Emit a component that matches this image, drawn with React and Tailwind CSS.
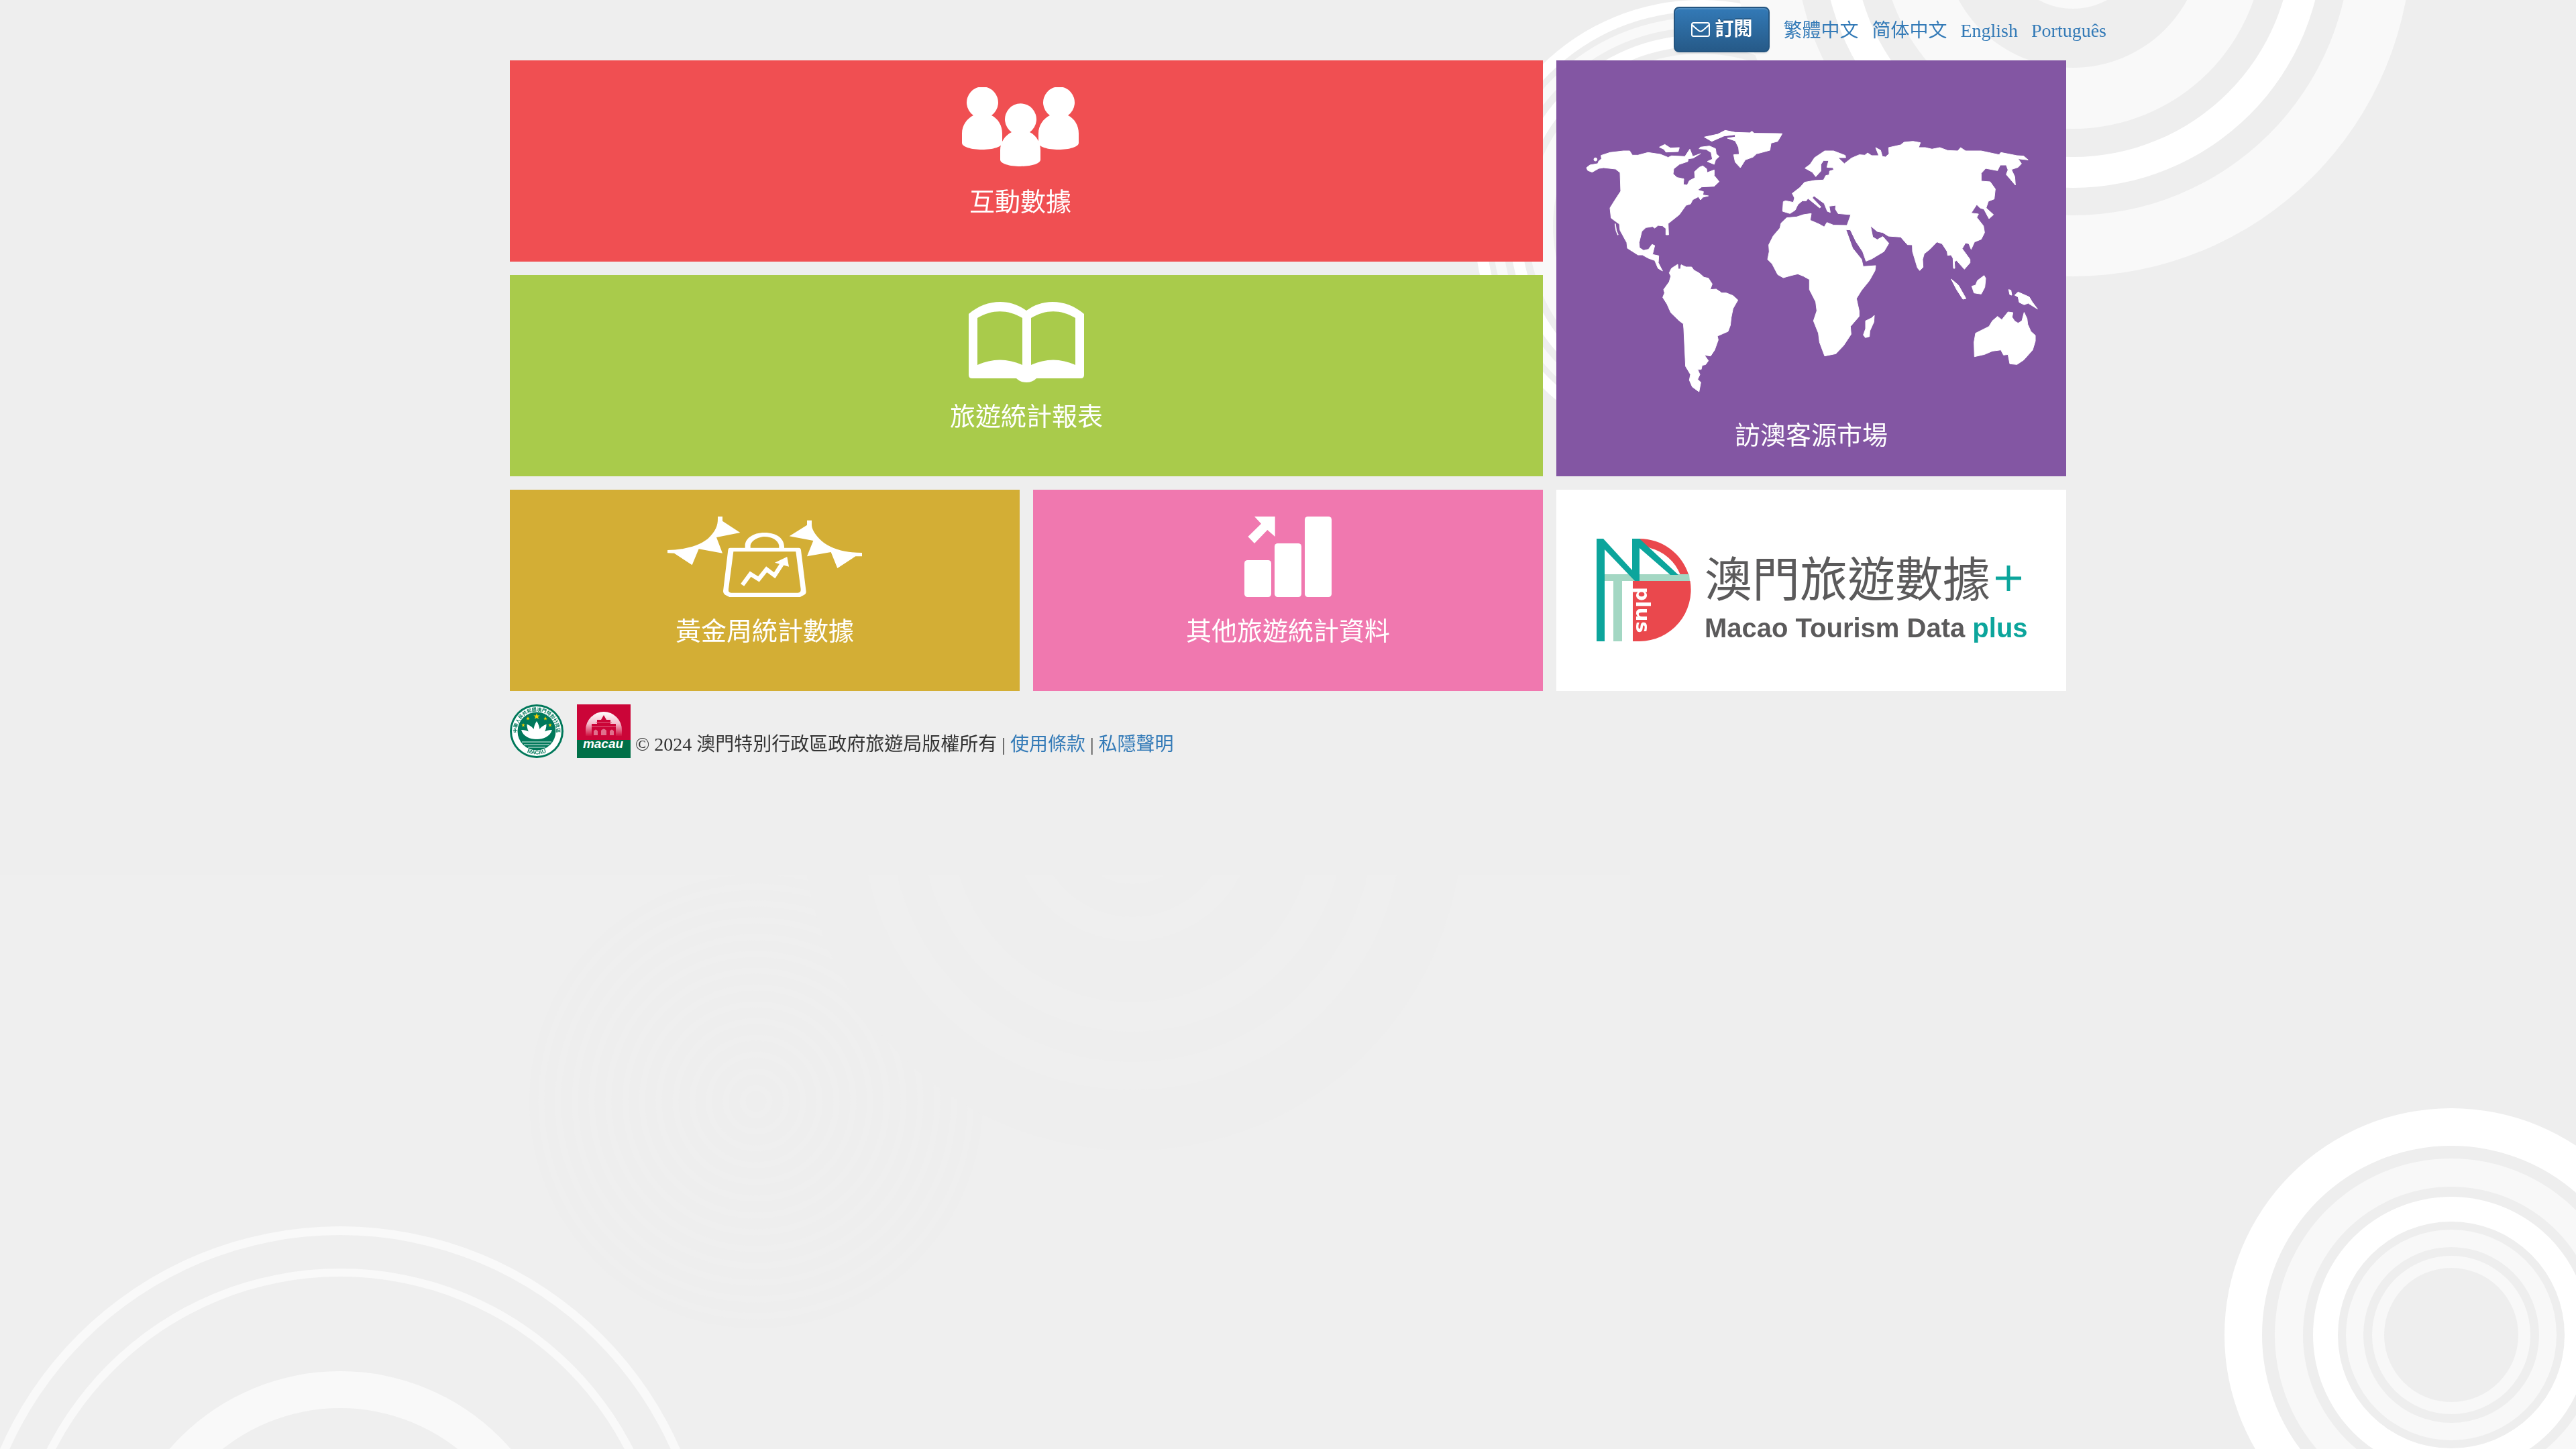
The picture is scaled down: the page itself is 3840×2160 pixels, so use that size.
import React from "react";

const SERIF = "font-['Liberation_Serif','Noto_Sans_CJK_TC',serif]";

/* Concentric rings: [radius, colour], painted from the outside in */
function Rings({ cx, cy, rings }) {
  return rings.map(([r, fill]) => <circle key={r} cx={cx} cy={cy} r={r} fill={fill} />);
}

const FAINT_RIPPLES = Array.from({ length: 13 }, (_, i) => 320 - i * 25);

function Backdrop() {
  const g = "#eeeeee";
  return (
    <svg
      aria-hidden="true"
      className="fixed inset-0 -z-10 h-full w-full"
      viewBox="0 0 3840 2160"
      preserveAspectRatio="xMidYMid slice"
    >
      <rect width="3840" height="2160" fill={g} />
      <Rings cx={2535} cy={337} rings={[[337, "#fff"], [320, g], [311, "#f9f9f9"], [296, g], [285, "#fff"], [268, g], [257, "#f9f9f9"], [220, g]]} />
      <Rings cx={3090} cy={-93} rings={[[505, "#f9f9f9"], [414, g], [373, "#fff"], [327, g], [285, "#f9f9f9"], [194, g], [106, "#f9f9f9"]]} />

      <clipPath id="lower">
        <rect y="1304" width="2430" height="856" />
      </clipPath>
      <g clipPath="url(#lower)">
        <rect y="1304" width="2430" height="856" fill="#efefef" />
        <circle cx="1127" cy="1642" r="338" fill={g} />
        {FAINT_RIPPLES.map((r) => (
          <circle key={r} cx="1127" cy="1642" r={r} fill="none" stroke="#efefef" strokeWidth="9" />
        ))}
        <Rings cx={1688} cy={1223} rings={[[492, g], [402, "#efefef"], [360, g], [315, "#efefef"], [271, g], [180, "#efefef"], [144, g], [95, "#efefef"]]} />
        <Rings cx={507} cy={2381} rings={[[553, "#f9f9f9"], [540, "#efefef"], [490, "#f9f9f9"], [478, "#efefef"], [337, "#f9f9f9"], [282, "#efefef"]]} />
      </g>
      <Rings cx={3654} cy={1990} rings={[[338, "#fff"], [282, g], [263, "#f8f8f8"], [221, g], [206, "#fff"], [169, g], [157, "#f8f8f8"], [131, g], [118, "#f8f8f8"], [100, g]]} />
    </svg>
  );
}

function EnvelopeIcon() {
  return (
    <svg aria-hidden="true" className="h-6 w-7 shrink-0" viewBox="0 0 28 24" fill="none" stroke="#fff" strokeWidth="2">
      <rect x="1" y="2" width="26" height="20" rx="2.5" />
      <path d="M1.5 5C5 9 8 11 11 13.5Q14 16 17 13.5C20 11 23 9 26.5 5" />
    </svg>
  );
}

const PERSON = "M17 42A23.5 23.5 0 1 1 44 42C54 47 60 57 60 69V83C60 89 46 93 30 93S0 89 0 83V69C0 57 7 47 17 42Z";

function PeopleIcon() {
  return (
    <svg aria-hidden="true" className="h-[120px] w-[174px]" viewBox="0 0 174 120" fill="#fff">
      <path d={PERSON} />
      <path d={PERSON} transform="translate(57 25)" />
      <path d={PERSON} transform="translate(114 0)" />
    </svg>
  );
}

function BookIcon() {
  return (
    <svg aria-hidden="true" className="h-[120px] w-[172px]" viewBox="0 0 172 120" fill="#fff">
      <path
        fillRule="evenodd"
        d="M0 18C14 6 30 0 47 0C62 0 75 5 86 13C97 5 110 0 125 0C142 0 158 6 172 18V109Q172 114 167 114H101C97 118 92 120 86 120S75 118 71 114H5Q0 114 0 109ZM13 24V94C35 84 58 84 80 94V24C58 11 35 11 13 24ZM93 24V94C115 84 137 84 159 94V24C137 11 115 11 93 24Z"
      />
    </svg>
  );
}

function GoldenWeekIcon() {
  return (
    <svg aria-hidden="true" className="h-[120px] w-[290px]" viewBox="45 60 870 360" fill="#fff">
      <path d="M270 60H291V80L370 132L264 153L291 224L185 205L155 277L75 224L45 223V210C110 210 180 195 225 160C262 125 270 100 270 70Z" />
      <path d="M669 77H690V98C690 120 715 155 745 178C790 208 840 222 915 222V238H886L805 291L776 219L669 238L697 168L590 148L669 98Z" />
      <path
        fillRule="evenodd"
        d="M325 200H632Q641 200 642 210L665 395Q666 405 655 411L638 420H322L303 410Q294 404 294 393L316 210Q317 200 325 200ZM340 217L318 385Q316 401 330 401H628Q642 401 641 385L619 217Z"
      />
      <path d="M392 202V190C392 160 425 132 479 132C535 132 567 160 567 195V202H544V190C540 165 510 150 480 150C450 150 416 170 416 192V202Z" />
      <path d="M380 366L416 317L453 340L488 296L524 323L560 268" fill="none" stroke="#fff" strokeWidth="19" />
      <path d="M525 266L580 240L588 284Z" />
    </svg>
  );
}

function BarsIcon() {
  return (
    <svg aria-hidden="true" className="h-[120px] w-[130px]" viewBox="345 60 390 360" fill="#fff">
      <rect x="345" y="255" width="120" height="165" rx="14" />
      <rect x="480" y="180" width="120" height="240" rx="14" />
      <rect x="615" y="60" width="120" height="360" rx="14" />
      <path d="M390 60H482V150L448 120L390 180L361 150L420 92Z" />
    </svg>
  );
}

function WorldMap() {
  return (
    <svg aria-hidden="true" className="h-[428px] w-full" viewBox="0 0 2280 1284" fill="#fff" stroke="#fff" strokeWidth="3" strokeLinejoin="round">
      <path d="M135 240L150 228L185 222L190 210L202 200L200 185L240 172L300 165L328 165L340 184L365 184L410 172L465 180L500 194L515 187L575 190L597 157L610 190L645 177L612 197L590 200L588 212L550 225L525 245L522 268L540 284L570 290L568 315L585 318L595 298L620 285L618 258L640 238L655 232L672 245L674 262L706 250L706 275L728 302L706 323L650 326L632 340L658 347L655 362L680 366L655 372L645 384L635 370L610 383L600 402L580 408L550 450L500 490L502 540L490 540L490 512L475 500L455 498L440 510L430 503L400 508L382 525L370 575L372 598L390 610L412 605L428 583L440 588L430 628L458 634L456 665L475 702L455 690L440 655L412 645L385 630L365 630L318 600L315 575L285 520L282 492L265 480L245 465L240 420L260 388L288 345L285 262L265 246L212 240L190 243L160 260L140 252Z" />
      <path d="M263 490L268 522L276 541" fill="none" strokeWidth="5" />
      <circle cx="175" cy="203" r="7" />
      <path d="M461 148L485 136L510 152L550 150L545 168L490 170L482 158Z" />
      <path d="M638 155L645 148L685 143L712 155L715 178L728 190L712 205L706 225L675 212L698 202L692 172L670 158Z" />
      <path d="M662 103L722 90L755 73L800 82L865 84L875 77L885 86L985 87L1010 88L990 122L960 130L955 162L895 178L880 192L845 205L823 240L800 215L793 182L818 180L815 150L800 120L765 108L800 103L800 92L750 98L695 122Z" />
      <path d="M505 710L515 690L543 672L545 693L555 693L558 674L580 684L605 684L615 698L640 712L660 730L680 734L697 760L688 785L715 783L740 800L760 800L790 812L812 832L790 870L782 910L778 945L768 972L720 993L724 1010L708 1055L690 1082L662 1078L680 1103L668 1120L652 1124L648 1142L632 1142L642 1165L632 1186L646 1200L638 1242L608 1220L595 1190L600 1165L578 1128L570 960L568 938L550 925L512 888L495 850L476 820L484 800L480 785L505 750L512 725Z" />
      <g transform="translate(1080 0)">
        <path d="M32 242L55 225L75 195L120 165L160 165L212 185L214 195L180 195L208 222L240 197L275 182L300 184L312 174L330 186L362 186L348 150L370 162L378 190L392 192L408 178L406 150L460 138L475 126L515 122L548 128L540 150L570 150L600 157L635 150L670 163L715 165L728 150L750 165L820 165L900 182L908 172L980 186L1010 188L1030 205L985 200L1000 222L985 238L955 248L970 280L973 318L932 270L940 250L932 228L905 228L893 253L840 243L820 265L820 300L860 303L883 335L878 380L852 390L842 420L875 450L855 468L832 425L815 420L800 405L775 443L808 447L800 462L830 500L835 530L820 560L790 572L775 605L765 580L750 576L735 602L770 650L770 665L745 694L710 655L700 660L702 690L696 690L694 645L685 630L670 632L668 615L645 580L622 572L590 605L565 625L558 650L560 685L545 700L535 688L513 615L512 585L490 584L460 550L405 546L380 530L355 525L325 500L335 550L355 562L380 548L407 578L385 615L330 648L305 658L290 615L260 570L235 518L215 517L245 600L285 650L292 682L348 678L345 700L320 745L285 788L262 825L274 880L274 905L235 950L238 985L205 1035L170 1072L120 1082L97 1020L92 980L70 925L85 880L80 840L52 785L52 740L25 725L0 715L-30 722L-65 732L-90 718L-115 670L-135 650L-128 615L-130 585L-110 545L-80 510L-75 488L-50 464L-5 460L25 450L60 445L55 475L95 492L118 505L130 485L160 497L220 498L237 450L180 445L168 425L170 408L140 412L145 440L132 435L118 400L72 366L65 375L103 415L98 420L45 377L38 388L20 388L0 405L-12 430L-35 445L-68 435L-65 392L-55 388L-20 395L-15 375L-25 355L10 328L30 305L75 297L115 295L125 275L140 272L142 255L160 250L158 240L130 238L138 208L115 208L103 225L103 255L80 280L65 260Z" />
        <path d="M342 900L340 930L322 970L320 995L302 1000L293 988L303 960L303 925L330 912Z" />
        <path d="M686 738L718 765L752 825L738 828L710 785Z" />
        <path d="M778 770L795 765L803 745L833 722L840 735L836 775L820 805L788 800Z" />
        <path d="M970 810L985 796L1035 818L1048 840L1072 872L1030 846L1012 853L990 842L985 818Z" />
        <path d="M943 785L953 788L957 810L948 808Z" />
        <path d="M790 1085L788 1020L795 980L855 950L870 925L893 905L912 920L940 885L962 888L958 908L970 926L985 935L1002 925L1012 887L1025 915L1028 940L1042 972L1062 990L1062 1015L1050 1055L1010 1100L980 1120L948 1117L940 1075L920 1078L908 1055L870 1060L835 1075Z" />
      </g>
    </svg>
  );
}

function DataPlusMark() {
  return (
    <svg aria-hidden="true" className="h-[154px] w-[141px] shrink-0" viewBox="0 0 141 154">
      <path d="M54 0H64A77 77 0 0 1 137 53H124.500A65 65 0 0 0 80 14L60 4Z" fill="#ea484d" />
      <path d="M54 63H139.500A77 77 0 0 1 64 153H54Z" fill="#ea484d" />
      <path d="M12 53H138L139 63H38V153H25V63H12Z" fill="#a3d7c3" />
      <path d="M0 0H10L53 47V0H64L122 54H110L64 14V63H57L12 16V153H0Z" fill="#0ca59c" />
      <text
        transform="translate(59 72) rotate(90)"
        fill="#fff"
        className="font-['DejaVu_Sans',sans-serif] text-[29px] font-bold"
      >
        plus
      </text>
    </svg>
  );
}

function PlusSign() {
  return (
    <svg aria-hidden="true" className="mt-2 ml-2 h-[38px] w-[38px] shrink-0" viewBox="0 0 38 38" stroke="#0ca59c" strokeWidth="5">
      <path d="M0 19H38M19 0V38" />
    </svg>
  );
}

const PETAL = "M40 52C34 44 34 34 40 25C46 34 46 44 40 52Z";

function Star({ x, y, r }) {
  const pts = Array.from({ length: 10 }, (_, i) => {
    const a = -Math.PI / 2 + (i * Math.PI) / 5;
    const q = i % 2 ? r * 0.4 : r;
    return `${x + q * Math.cos(a)},${y + q * Math.sin(a)}`;
  }).join(" ");
  return <polygon points={pts} fill="#f8d000" />;
}

function MacaoEmblem() {
  return (
    <svg role="img" aria-label="澳門特別行政區" className="size-20 shrink-0" viewBox="0 0 80 80">
      <circle cx="40" cy="40" r="40" fill="#00785a" />
      <circle cx="40" cy="40" r="37" fill="#fff" />
      <circle cx="40" cy="40" r="28.500" fill="#00785a" />
      <path id="arc-top" d="M14.500 54.500A29.500 29.500 0 1 1 65.500 54.500" fill="none" />
      <path id="arc-bottom" d="M17 66A35.500 35.500 0 0 0 63 66" fill="none" />
      <text fill="#00785a" className="font-['Noto_Sans_CJK_TC',sans-serif] text-[7px] font-bold">
        <textPath href="#arc-top" startOffset="50%" textAnchor="middle">中華人民共和國澳門特別行政區</textPath>
      </text>
      <text fill="#00785a" className="font-['Liberation_Sans',sans-serif] text-[8px] font-bold">
        <textPath href="#arc-bottom" startOffset="50%" textAnchor="middle">MACAU</textPath>
      </text>
      <g fill="#fff">
        <path d={PETAL} />
        <path d={PETAL} transform="rotate(-34 40 51)" />
        <path d={PETAL} transform="rotate(34 40 51)" />
        <path d="M40 52C30 52 20 48 17 38C27 38 36 44 40 52C44 44 53 38 63 38C60 48 50 52 40 52Z" />
      </g>
      <path d="M18 56H62M21 60H59M27 64H53" stroke="#fff" strokeWidth="1.500" opacity="0.6" />
      <Star x={40} y={18} r={5} />
      <Star x={27} y={21} r={3} />
      <Star x={53} y={21} r={3} />
      <Star x={20} y={31} r={3} />
      <Star x={60} y={31} r={3} />
    </svg>
  );
}

function TourismOfficeLogo() {
  return (
    <svg role="img" aria-label="澳門旅遊局" className="ml-5 size-20 shrink-0" viewBox="0 0 80 80">
      <defs>
        <linearGradient id="dome" x1="0" y1="0" x2="0" y2="1">
          <stop offset="0" stopColor="#fff" />
          <stop offset="0.500" stopColor="#f3bccb" />
          <stop offset="1" stopColor="#d0103f" />
        </linearGradient>
      </defs>
      <rect width="80" height="53" fill="#cb0538" />
      <rect y="53" width="80" height="27" fill="#007048" />
      <path d="M13 47V38A27 27 0 0 1 67 38V47Z" fill="url(#dome)" />
      <path d="M40 16L44 23H50V29H58V47H22V29H30V23H36Z" fill="#cb0538" />
      <path d="M25 46V40Q28 35 31 40V46ZM36 46V39Q40 34 44 39V46ZM49 46V40Q52 35 55 40V46Z" fill="#e0708c" />
      <path d="M22 33H58M28 27H52" stroke="#e26a86" strokeWidth="1" />
      <text x="39" y="65" textAnchor="middle" fill="#fff" className="font-['Liberation_Sans',sans-serif] text-[19px] font-bold italic">
        macau
      </text>
    </svg>
  );
}

function Tile({ icon, label, className }) {
  return (
    <a href="#" className={`flex min-h-[300px] flex-col items-center text-[38px] leading-[50px] text-white ${className}`}>
      {icon}
      <span className="mt-[26px]">{label}</span>
    </a>
  );
}

export default function App() {
  return (
    <div className={`min-h-screen text-[28px] leading-10 text-[#333] ${SERIF}`}>
      <Backdrop />

      <header className="mx-auto flex h-[90px] max-w-[2440px] items-start justify-end gap-5 pt-[10px]">
        <button
          type="button"
          className="flex h-[68px] items-center gap-[7px] rounded-lg border-2 border-[#245580] bg-linear-to-b from-[#337ab7] to-[#265a88] px-6 font-bold text-white shadow-[inset_0_2px_0_rgba(255,255,255,0.15),0_2px_2px_rgba(0,0,0,0.075)] text-shadow-[0_-2px_0_rgba(0,0,0,0.2)]"
        >
          <EnvelopeIcon />
          訂閱
        </button>
        <nav className="flex gap-5 pt-4 text-[#337ab7]">
          <a href="#" lang="zh-Hant">繁體中文</a>
          <a href="#" lang="zh-Hans">简体中文</a>
          <a href="#" lang="en">English</a>
          <a href="#" lang="pt">Português</a>
        </nav>
      </header>

      <main className="mx-auto grid max-w-[2320px] grid-cols-3 gap-5">
        <Tile icon={<PeopleIcon />} label="互動數據" className="col-span-2 bg-[#f04f52] pt-10 pr-[18px]" />
        <Tile icon={<WorldMap />} label="訪澳客源市場" className="row-span-2 bg-[#8356a3] pt-20" />
        <Tile icon={<BookIcon />} label="旅遊統計報表" className="col-span-2 bg-[#a9cb4b] pt-10" />
        <Tile icon={<GoldenWeekIcon />} label="黃金周統計數據" className="bg-[#d3ae35] pt-10" />
        <Tile icon={<BarsIcon />} label="其他旅遊統計資料" className="bg-[#f078af] pt-10" />
        <a href="#" className="flex min-h-[300px] items-center gap-5 bg-white pl-[60px] text-[#5b5a5b]">
          <DataPlusMark />
          <span className="flex flex-col gap-2 pt-6 font-['Liberation_Sans',sans-serif]">
            <span className="flex items-center font-['Noto_Sans_CJK_TC',sans-serif] text-[71px] leading-[80px]">
              澳門旅遊數據
              <PlusSign />
            </span>
            <span className="text-[40px] leading-[60px] font-bold whitespace-nowrap">
              Macao Tourism Data <span className="text-[#0ca59c]">plus</span>
            </span>
          </span>
        </a>
      </main>

      <footer className="mx-auto flex max-w-[2320px] items-end pt-5">
        <MacaoEmblem />
        <TourismOfficeLogo />
        <p className="ml-[7px]">
          © 2024 澳門特別行政區政府旅遊局版權所有 |{" "}
          <a href="#" className="text-[#337ab7]">使用條款</a> |{" "}
          <a href="#" className="text-[#337ab7]">私隱聲明</a>
        </p>
      </footer>
    </div>
  );
}
